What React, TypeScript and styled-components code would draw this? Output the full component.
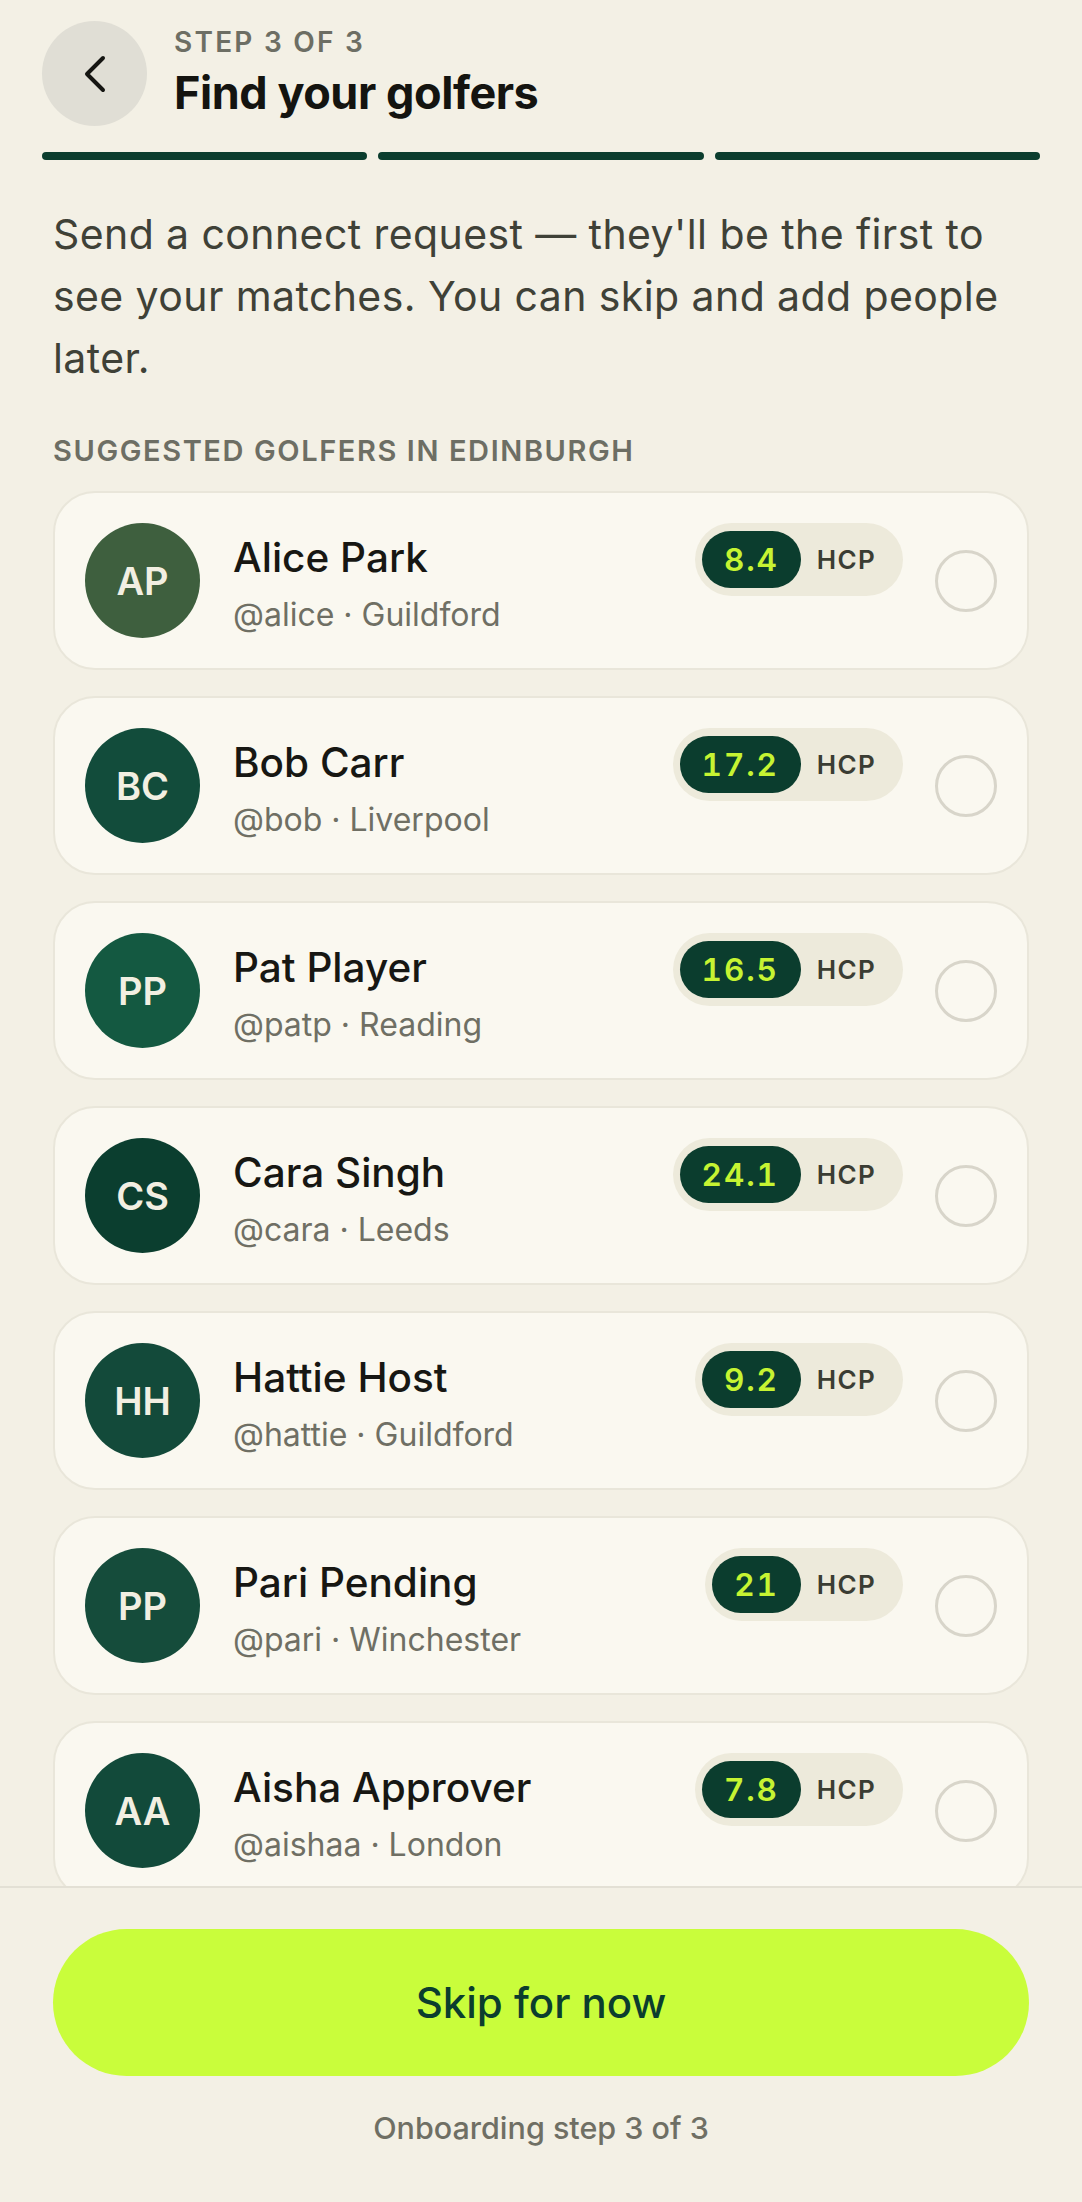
import React from "react";
import styled, { createGlobalStyle } from "styled-components";
import { ChevronLeft } from "lucide-react";

const GlobalStyle = createGlobalStyle`
  html, body {
    margin: 0;
    padding: 0;
    background: #f3f0e5;
    font-family: Inter, "Noto Sans", "Liberation Sans", sans-serif;
  }
  * { box-sizing: border-box; }
`;

const Page = styled.div`
  height: 100vh;
  display: flex;
  flex-direction: column;
  background: #f3f0e5;
`;

const Scroll = styled.main`
  flex: 1;
  overflow: hidden;
`;

const Header = styled.header`
  display: flex;
  align-items: center;
  gap: 27px;
  padding: 21px 42px 0;
`;

const BackButton = styled.button`
  width: 105px;
  height: 105px;
  border-radius: 50%;
  border: none;
  background: #e0ded5;
  color: #151512;
  display: flex;
  align-items: center;
  justify-content: center;
  padding: 0;
  flex-shrink: 0;
`;

const HeaderText = styled.div`
  display: flex;
  flex-direction: column;
  gap: 5px;
  margin-top: -2px;
`;

const StepLabel = styled.div`
  font-size: 28px;
  line-height: 36px;
  font-weight: 600;
  letter-spacing: 0.08em;
  color: #6d6e64;
`;

const Title = styled.h1`
  margin: 0;
  font-size: 45px;
  line-height: 56px;
  font-weight: 700;
  letter-spacing: -0.01em;
  color: #141410;
`;

const Progress = styled.div`
  display: grid;
  grid-template-columns: repeat(3, 1fr);
  gap: 11px;
  padding: 0 42px;
  margin-top: 26px;
`;

const Bar = styled.div<{ $done: boolean }>`
  height: 8px;
  border-radius: 4px;
  background: ${({ $done }) => ($done ? "#0b3d2e" : "#dcd9ce")};
`;

const Intro = styled.p`
  margin: 43px 0 0;
  padding: 0 53px;
  font-size: 41px;
  line-height: 62px;
  letter-spacing: 0.01em;
  color: #3f4137;
`;

const SectionLabel = styled.div`
  margin-top: 44px;
  padding: 0 53px;
  font-size: 29px;
  line-height: 36px;
  font-weight: 600;
  letter-spacing: 0.055em;
  color: #6d6e64;
`;

const List = styled.div`
  display: flex;
  flex-direction: column;
  gap: 26px;
  padding: 0 53px;
  margin-top: 22px;
`;

const Card = styled.div`
  display: flex;
  align-items: center;
  padding: 30px;
  border: 2px solid #e9e6da;
  border-radius: 42px;
  background: #faf8f0;
`;

const Avatar = styled.div<{ $bg: string }>`
  width: 115px;
  height: 115px;
  border-radius: 50%;
  flex-shrink: 0;
  background: ${({ $bg }) => $bg};
  color: #f2efe2;
  display: flex;
  align-items: center;
  justify-content: center;
  font-size: 38px;
  font-weight: 600;
`;

const Info = styled.div`
  flex: 1;
  min-width: 0;
  margin-left: 33px;
  padding-top: 8px;
  display: flex;
  flex-direction: column;
  gap: 13px;
`;

const Name = styled.div`
  font-size: 40.5px;
  line-height: 48px;
  font-weight: 500;
  color: #171713;
`;

const Meta = styled.div`
  font-size: 32px;
  line-height: 40px;
  color: #6f6f64;
`;

const HcpPill = styled.div`
  align-self: flex-start;
  display: flex;
  align-items: center;
  gap: 16px;
  height: 73px;
  padding: 0 27px 0 7px;
  border-radius: 37px;
  background: #edeadb;
`;

const HcpValue = styled.span`
  height: 57px;
  display: flex;
  align-items: center;
  padding: 0 22px;
  border-radius: 29px;
  background: #0b3d2e;
  color: #c6f432;
  font-size: 31.5px;
  font-weight: 600;
  font-variant-numeric: tabular-nums;
  letter-spacing: 0.06em;
`;

const HcpLabel = styled.span`
  font-size: 26px;
  font-weight: 600;
  letter-spacing: 0.05em;
  color: #3b3d33;
`;

const Select = styled.div`
  width: 62px;
  height: 62px;
  margin-left: 32px;
  border-radius: 50%;
  border: 3px solid #d8d5ca;
  flex-shrink: 0;
`;

const Footer = styled.footer`
  border-top: 2px solid #e3e0d5;
  background: #f3f0e5;
  padding: 41px 53px 54px;
  display: flex;
  flex-direction: column;
  align-items: stretch;
`;

const SkipButton = styled.button`
  height: 147px;
  border: none;
  border-radius: 74px;
  background: #c9fd3b;
  color: #0b3d2e;
  font-family: inherit;
  font-size: 42px;
  font-weight: 500;
`;

const FooterNote = styled.div`
  margin-top: 32px;
  text-align: center;
  font-size: 30.5px;
  line-height: 40px;
  font-weight: 500;
  color: #6f6f64;
`;

type Golfer = {
  initials: string;
  name: string;
  handle: string;
  city: string;
  hcp: string;
  color: string;
};

const golfers: Golfer[] = [
  { initials: "AP", name: "Alice Park", handle: "alice", city: "Guildford", hcp: "8.4", color: "#3e5f3e" },
  { initials: "BC", name: "Bob Carr", handle: "bob", city: "Liverpool", hcp: "17.2", color: "#124c3b" },
  { initials: "PP", name: "Pat Player", handle: "patp", city: "Reading", hcp: "16.5", color: "#145941" },
  { initials: "CS", name: "Cara Singh", handle: "cara", city: "Leeds", hcp: "24.1", color: "#0b3e2f" },
  { initials: "HH", name: "Hattie Host", handle: "hattie", city: "Guildford", hcp: "9.2", color: "#134a3a" },
  { initials: "PP", name: "Pari Pending", handle: "pari", city: "Winchester", hcp: "21", color: "#154c3b" },
  { initials: "AA", name: "Aisha Approver", handle: "aishaa", city: "London", hcp: "7.8", color: "#124a3a" },
];

const App: React.FC = () => {
  return (
    <>
      <GlobalStyle />
      <Page>
        <Scroll>
          <Header>
            <BackButton aria-label="Back">
              <ChevronLeft size={64} strokeWidth={1.5} />
            </BackButton>
            <HeaderText>
              <StepLabel>STEP 3 OF 3</StepLabel>
              <Title>Find your golfers</Title>
            </HeaderText>
          </Header>
          <Progress>
            {[0, 1, 2].map((i) => (
              <Bar key={i} $done />
            ))}
          </Progress>
          <Intro>
            Send a connect request — they'll be the first to see your matches. You can skip and add people later.
          </Intro>
          <SectionLabel>SUGGESTED GOLFERS IN EDINBURGH</SectionLabel>
          <List>
            {golfers.map((g) => (
              <Card key={g.handle}>
                <Avatar $bg={g.color}>{g.initials}</Avatar>
                <Info>
                  <Name>{g.name}</Name>
                  <Meta>@{g.handle} · {g.city}</Meta>
                </Info>
                <HcpPill>
                  <HcpValue>{g.hcp}</HcpValue>
                  <HcpLabel>HCP</HcpLabel>
                </HcpPill>
                <Select />
              </Card>
            ))}
          </List>
        </Scroll>
        <Footer>
          <SkipButton>Skip for now</SkipButton>
          <FooterNote>Onboarding step 3 of 3</FooterNote>
        </Footer>
      </Page>
    </>
  );
};

export default App;
